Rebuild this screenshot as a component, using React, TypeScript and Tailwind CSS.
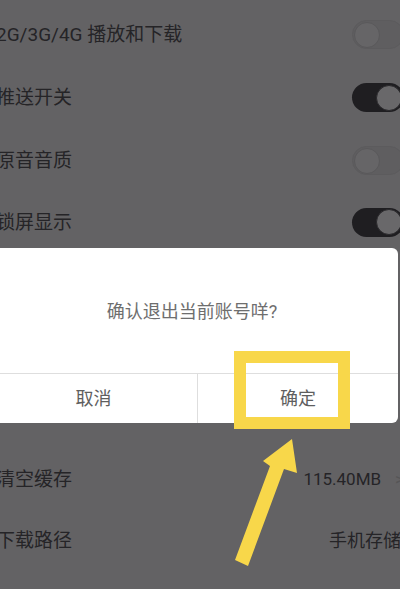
const font = { fontFamily: 'Roboto, "Noto Sans CJK SC", sans-serif' };

function Toggle({ on }: { on: boolean }) {
  if (on) {
    return (
      <span className="flex h-[29px] w-[52px] shrink-0 items-center justify-end rounded-full bg-[#1f1e21] pr-[2px]">
        <span className="h-[26px] w-[26px] rounded-full border border-[#2a292c] bg-[#69686a]" />
      </span>
    );
  }
  return (
    <span className="flex h-[29px] w-[52px] shrink-0 items-center rounded-full border border-[#5c5b5d] bg-[#5f5e60] pl-[1px]">
      <span className="h-[26px] w-[26px] rounded-full border border-[#5a595b] bg-[#666567]" />
    </span>
  );
}

function Row({
  label,
  right,
  className = "",
}: {
  label: string;
  right: React.ReactNode;
  className?: string;
}) {
  return (
    <div className={`flex items-center justify-between ${className}`}>
      <span className="text-[19px] leading-none text-[#252427]">{label}</span>
      {right}
    </div>
  );
}

export default function App() {
  return (
    <div
      className="relative h-[589px] w-[400px] overflow-hidden bg-[#636264]"
      style={font}
    >
      <div className="-ml-[4px] w-[408px]">
        <div className="h-[3px]" />
        <Row label="2G/3G/4G 播放和下载" right={<Toggle on={false} />} className="h-[63px]" />
        <Row label="推送开关" right={<Toggle on />} className="h-[63px]" />
        <Row label="原音音质" right={<Toggle on={false} />} className="h-[63px]" />
        <Row label="锁屏显示" right={<Toggle on />} className="h-[56px] pt-[4px]" />
      </div>

      <div className="-ml-[14px] w-[412px] rounded-r-[6px] bg-white">
        <div className="flex h-[125px] items-center justify-center pt-[2px] text-[18px] text-[#6e6e6e]">
          确认退出当前账号咩?
        </div>
        <div className="grid h-[50px] grid-cols-[212px_1fr] border-t border-[#dedede] text-[18px] text-[#5e5e5e]">
          <div className="flex items-center justify-center border-r border-[#dedede] pl-[4px]">取消</div>
          <div className="flex items-center justify-center">确定</div>
        </div>
      </div>

      <div className="-ml-[4px] w-[430px]">
        <div className="h-[26px]" />
        <Row
          label="清空缓存"
          className="h-[61px] pr-[22px]"
          right={
            <span className="flex items-center gap-[14px] text-[17px] text-[#252427]">
              115.40MB
              <span className="text-[#565557]">&gt;</span>
            </span>
          }
        />
        <Row
          label="下载路径"
          className="h-[61px] pr-[25px]"
          right={<span className="text-[18px] text-[#252427]">手机存储</span>}
        />
      </div>

      {/* annotation: yellow highlight box */}
      <div className="absolute left-[234px] top-[351px] h-[78px] w-[116px] border-[12px] border-[#f8d74a]" />

      {/* annotation: arrow */}
      <svg className="absolute left-0 top-0" width="400" height="589" viewBox="0 0 400 589">
        <path
          d="M292 439 L297 473 L284 469 L248 566 L235 560 L270 466 L263 461 Z"
          fill="#f8d74a"
        />
      </svg>
    </div>
  );
}
